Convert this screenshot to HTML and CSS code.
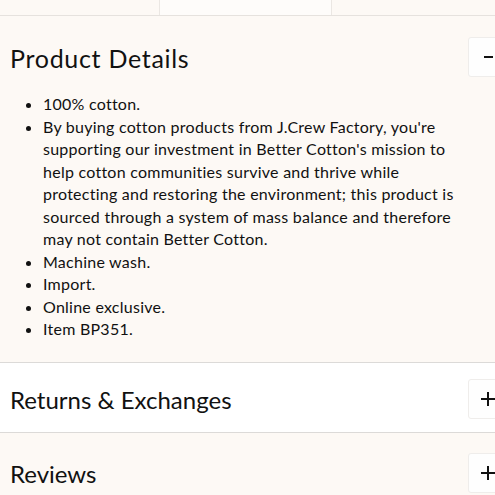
FILE: index.html
```html
<!DOCTYPE html>
<html>
<head>
<meta charset="utf-8">
<link rel="stylesheet" href="styles.css">
</head>
<body>
<div class="tabs">
  <div class="tab"></div>
  <div class="tab tab-mid"></div>
  <div class="tab"></div>
</div>
<section class="panel">
  <div class="panel-head">
    <h2 class="panel-title">Product Details</h2>
    <button class="toggle"><span class="minus"></span></button>
  </div>
  <ul class="details">
    <li>100% cotton.</li>
    <li>By buying cotton products from J.Crew Factory, you're supporting our investment in Better Cotton's mission to help cotton communities survive and thrive while protecting and restoring the environment; this product is sourced through a system of mass balance and therefore may not contain Better Cotton.</li>
    <li>Machine wash.</li>
    <li>Import.</li>
    <li>Online exclusive.</li>
    <li>Item BP351.</li>
  </ul>
</section>
<section class="panel panel-white">
  <div class="panel-head">
    <h2 class="panel-title title-tight">Returns &amp; Exchanges</h2>
    <button class="toggle"><span class="plus"></span></button>
  </div>
</section>
<section class="panel panel-last">
  <div class="panel-head">
    <h2 class="panel-title title-tight">Reviews</h2>
    <button class="toggle"><span class="plus"></span></button>
  </div>
</section>
</body>
</html>
```
FILE: styles.css
```css
html, body {
  margin: 0;
  padding: 0;
  background: #fdf9f5;
  overflow: hidden;
  width: 495px;
  height: 495px;
}
body {
  font-family: Lato, "Noto Sans", sans-serif;
  color: #111;
}
.tabs {
  display: grid;
  grid-template-columns: 160px 172px 1fr;
  height: 15px;
  border-bottom: 1px solid #e6e2de;
}
.tab {
  border-right: 1px solid #ebe7e3;
}
.tab:last-child { border-right: none; }
.tab-mid { background: #fefcfa; }
.panel {
  padding: 21px 0 21px 10px;
  border-bottom: 1px solid #dcdad8;
}
.panel-white {
  background: #ffffff;
  padding: 16px 0 13px 10px;
}
.panel-last {
  padding: 20px 0 20px 10px;
  border-bottom: none;
}
.panel-head {
  display: flex;
  align-items: center;
  justify-content: space-between;
  height: 40px;
}
.panel-title {
  margin: 0;
  font-size: 25px;
  font-weight: 400;
  letter-spacing: 0.7px;
  padding-top: 1px;
}
.title-tight {
  font-size: 24px;
  letter-spacing: 0;
}
.toggle {
  width: 40px;
  height: 40px;
  margin-right: -13px;
  background: #fefefe;
  border: 1px solid #efedeb;
  border-radius: 3px;
  position: relative;
  padding: 0;
  flex: none;
}
.minus, .plus {
  position: absolute;
  left: 12px;
  top: 18px;
  width: 14px;
  height: 2px;
  background: #111;
}
.minus { width: 9px; left: 15px; }
.plus::after {
  content: "";
  position: absolute;
  left: 6px;
  top: -6px;
  width: 2px;
  height: 14px;
  background: #111;
}
.details {
  margin: 16px 0 0 0;
  padding-left: 33px;
  font-size: 16px;
  line-height: 22.5px;
  letter-spacing: 0.25px;
  width: 420px;
}
```
